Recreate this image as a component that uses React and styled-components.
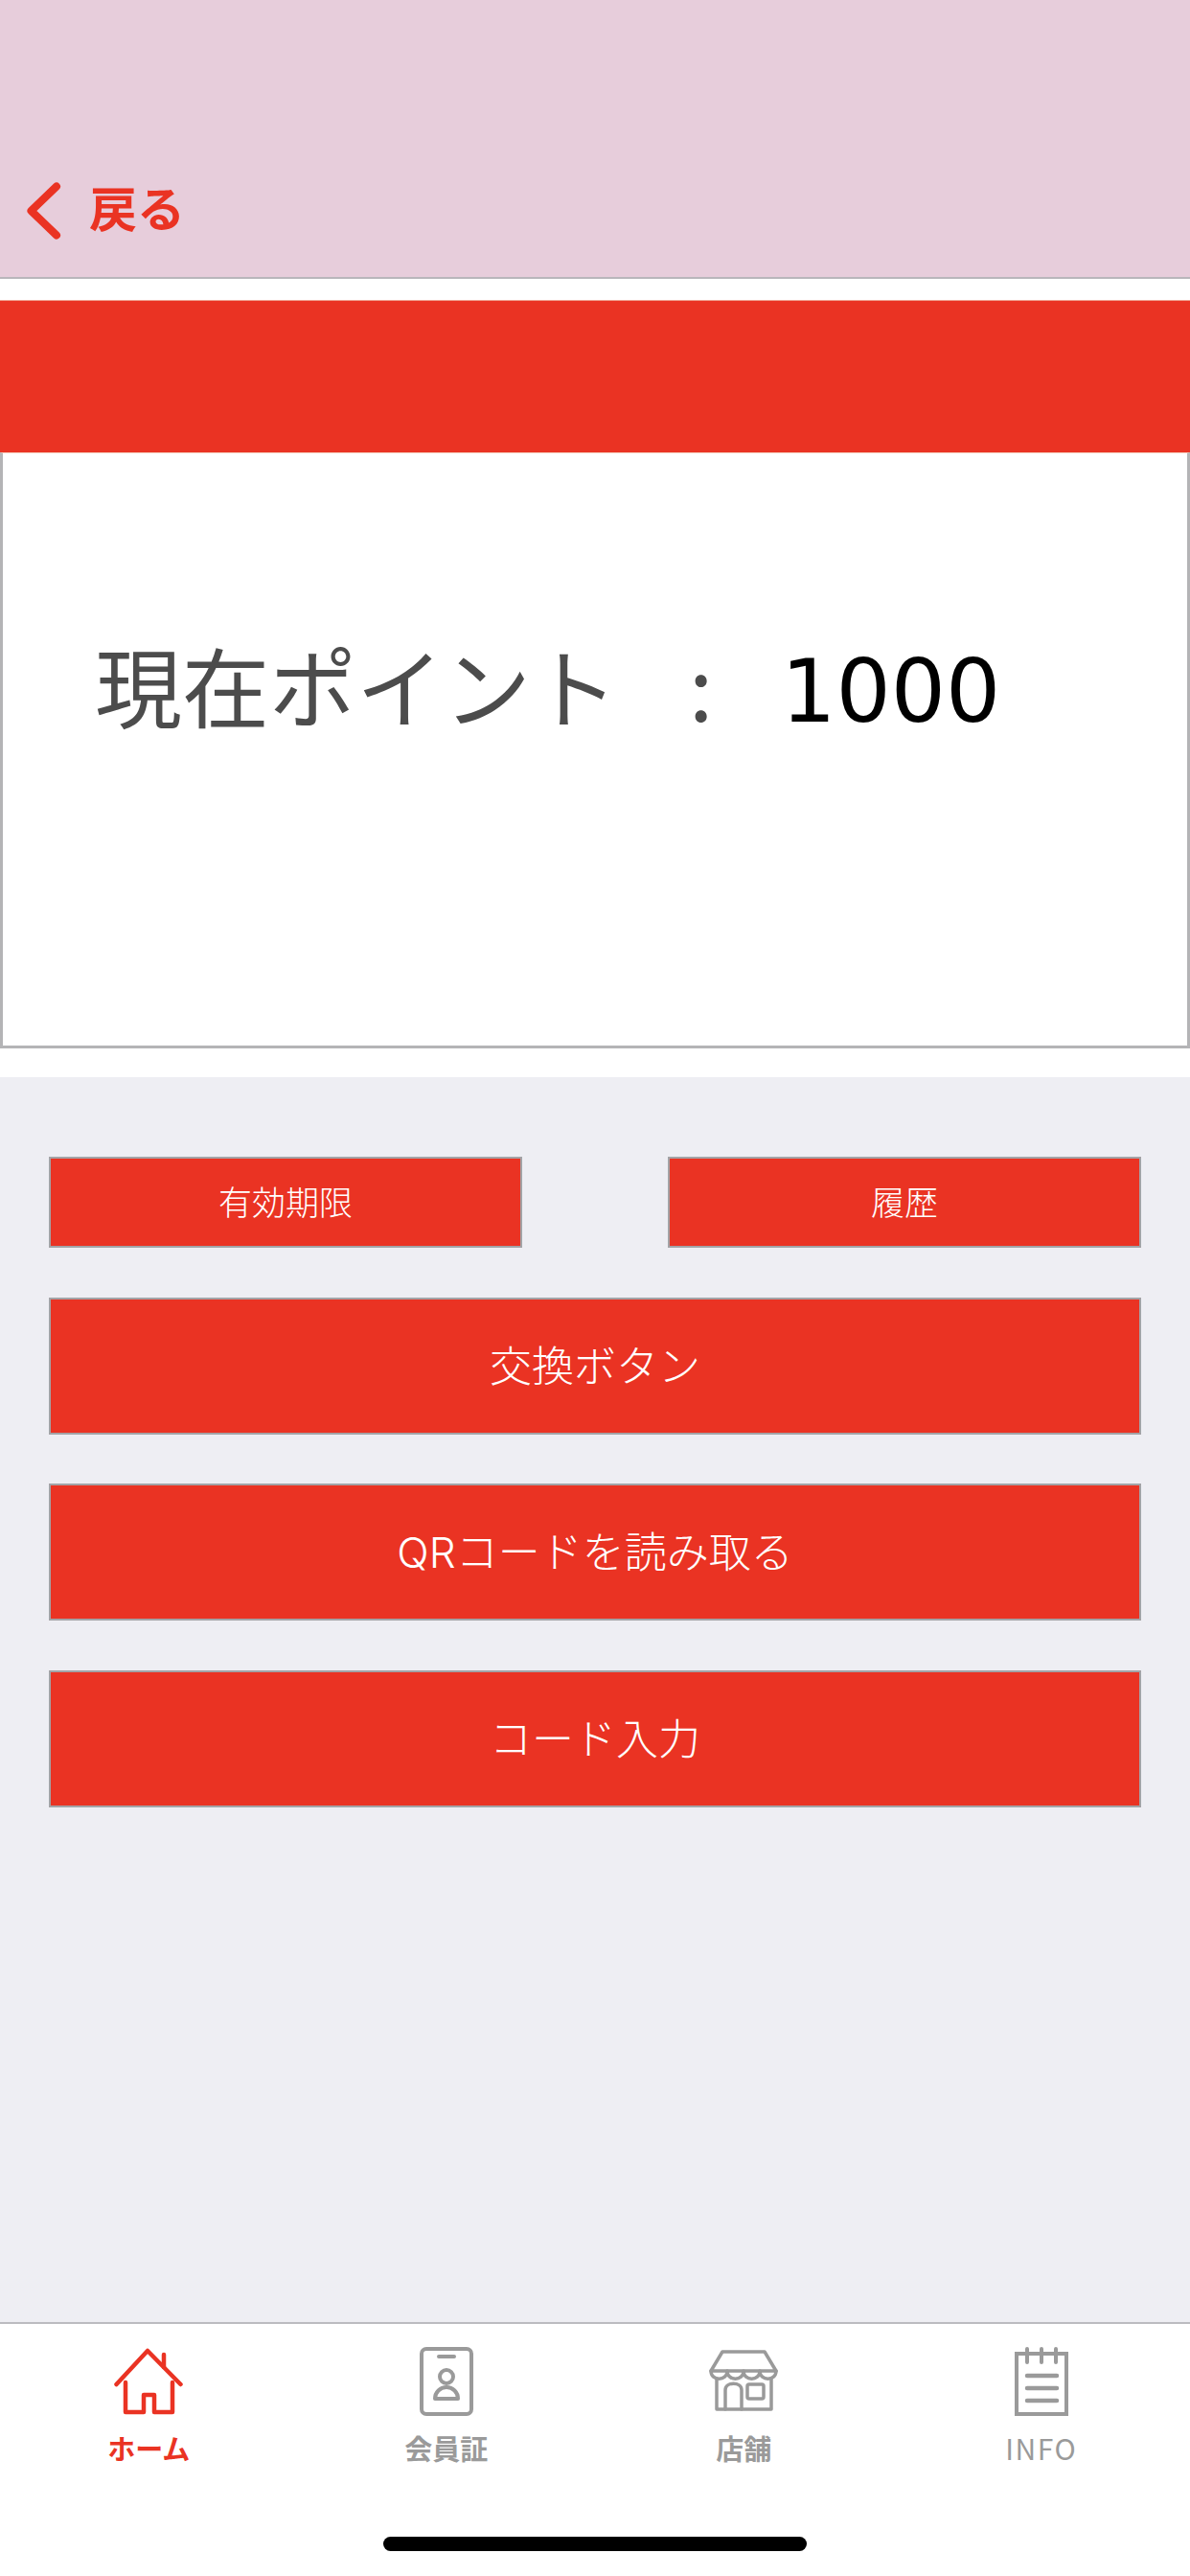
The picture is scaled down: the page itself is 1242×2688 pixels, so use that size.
import React from "react"
import styled, { createGlobalStyle } from "styled-components"

const RED = "#ea3323"
const GREY = "#9a9a9a"

const GlobalStyle = createGlobalStyle`
    html, body {
        margin: 0;
        padding: 0;
        background: #fff;
    }
    body {
        font-family: "Noto Sans CJK JP", "Noto Sans", sans-serif;
    }
`

const HomeIcon = () => (
    <svg width="72" height="70" viewBox="0 0 72 70" fill="none" stroke={RED} strokeWidth="4.5" strokeLinejoin="round" strokeLinecap="round">
        <path d="M2.5 38 L35 3 L69.5 38" />
        <path d="M52 20 L52 7" />
        <path d="M12 36 V67 H31 V49 H42 V67 H61 V36" />
    </svg>
)

const CardIcon = () => (
    <svg width="56" height="72" viewBox="0 0 56 72" fill="none" stroke={GREY} strokeWidth="4" strokeLinejoin="round" strokeLinecap="round">
        <rect x="2" y="2" width="52" height="68" rx="5" />
        <path d="M20 10 H36" />
        <circle cx="28" cy="31" r="7" />
        <path d="M16 54 A12 12 0 0 1 40 54 Z" />
    </svg>
)

const StoreIcon = () => (
    <svg width="72" height="66" viewBox="0 0 72 66" fill="none" stroke={GREY} strokeWidth="3.5" strokeLinejoin="round" strokeLinecap="round">
        <path d="M14 2 H58 L70 22 H2 Z" />
        <path d="M2 22 C2 33 19 33 19 22 C19 33 36 33 36 22 C36 33 53 33 53 22 C53 33 70 33 70 22" />
        <path d="M8 30 V62 H65 V30" />
        <path d="M17 62 V42 C17 33 34 33 34 42 V62" />
        <rect x="40" y="36" width="17" height="15" rx="2" />
    </svg>
)

const InfoIcon = () => (
    <svg width="56" height="72" viewBox="0 0 56 72" fill="none" stroke={GREY} strokeWidth="4" strokeLinejoin="miter" strokeLinecap="round">
        <path d="M2 7 H54 V70 H2 Z" />
        <path d="M13 2 V16 M28 2 V16 M43 2 V16" />
        <path d="M13 30 H44 M13 43 H44 M13 56 H44" strokeWidth="4.5" />
    </svg>
)

const tabs = [
    { label: "ホーム", icon: <HomeIcon />, active: true },
    { label: "会員証", icon: <CardIcon /> },
    { label: "店舗", icon: <StoreIcon /> },
    { label: "INFO", icon: <InfoIcon />, thin: true },
]

function App() {
    return (
        <Page>
            <GlobalStyle />
            <Header>
                <BackLink>
                    <svg width="36" height="60" viewBox="0 0 36 60" fill="none" stroke={RED} strokeWidth="8" strokeLinecap="round" strokeLinejoin="round">
                        <path d="M31 4.5 L4.5 30 L31 55.5" />
                    </svg>
                    <BackText>戻る</BackText>
                </BackLink>
            </Header>
            <RedBand />
            <PointCard>
                <PointLabel>現在ポイント</PointLabel>
                <Colon>:</Colon>
                <PointValue>1000</PointValue>
            </PointCard>
            <Actions>
                <SmallRow>
                    <ActionButton small>有効期限</ActionButton>
                    <ActionButton small>履歴</ActionButton>
                </SmallRow>
                <ActionButton>交換ボタン</ActionButton>
                <ActionButton>QRコードを読み取る</ActionButton>
                <ActionButton>コード入力</ActionButton>
            </Actions>
            <TabBar>
                <Tabs>
                    {tabs.map((t) => (
                        <Tab key={t.label} active={t.active}>
                            <TabIcon>{t.icon}</TabIcon>
                            <TabLabel thin={t.thin}>{t.label}</TabLabel>
                        </Tab>
                    ))}
                </Tabs>
                <HomeIndicator />
            </TabBar>
        </Page>
    )
}

export default App

const Page = styled.div`
    width: 1242px;
    height: 2688px;
    display: flex;
    flex-direction: column;
    overflow: hidden;
    background: #fff;
`

const Header = styled.header`
    box-sizing: border-box;
    height: 291px;
    flex: none;
    background: #e7cddb;
    border-bottom: 2px solid #b9b6bb;
    display: flex;
    align-items: flex-start;
    padding: 185px 0 0 28px;
`

const BackLink = styled.div`
    display: flex;
    align-items: center;
    gap: 29px;
`

const BackText = styled.span`
    color: ${RED};
    font-size: 50px;
    font-weight: 700;
    line-height: 60px;
    margin-bottom: 10px;
`

const RedBand = styled.div`
    box-sizing: border-box;
    height: 159px;
    flex: none;
    margin-top: 22px;
    background: ${RED};
    border-top: 1px solid #f0a08f;
`

const PointCard = styled.section`
    box-sizing: border-box;
    height: 622px;
    flex: none;
    background: #fff;
    border: 3px solid #b4b4b6;
    border-top-color: #f4c9b8;
    border-top-width: 1px;
    display: flex;
    align-items: center;
    padding: 0 0 138px 96px;
`

const PointLabel = styled.span`
    color: #4c4c4c;
    font-size: 91px;
    font-weight: 400;
    line-height: 1;
    white-space: nowrap;
`

const Colon = styled.span`
    color: #4c4c4c;
    font-size: 91px;
    font-weight: 400;
    line-height: 1;
    margin-left: 74px;
`

const PointValue = styled.span`
    color: #000;
    font-family: "DejaVu Sans", sans-serif;
    font-size: 90px;
    line-height: 1;
    margin-left: 71px;
    margin-top: 18px;
`

const Actions = styled.main`
    flex: 1;
    margin-top: 30px;
    background: #eeeef3;
    display: flex;
    flex-direction: column;
    gap: 51.5px;
    padding: 83px 51px 0;
`

const SmallRow = styled.div`
    display: flex;
    justify-content: space-between;
`

const ActionButton = styled.button`
    box-sizing: border-box;
    display: block;
    flex: none;
    width: ${(p) => (p.small ? "494px" : "100%")};
    height: ${(p) => (p.small ? "95px" : "143px")};
    padding: 0 0 5px;
    background: ${RED};
    border: 2px solid #a3a3a6;
    border-radius: 0;
    color: #fff;
    font-family: "Inter", "Noto Sans CJK JP", sans-serif;
    font-size: ${(p) => (p.small ? "35px" : "44px")};
    font-weight: 300;
`

const TabBar = styled.nav`
    box-sizing: border-box;
    height: 265px;
    flex: none;
    background: #fff;
    border-top: 2px solid #bcbcc0;
    display: flex;
    flex-direction: column;
    align-items: center;
`

const Tabs = styled.div`
    width: 100%;
    display: grid;
    grid-template-columns: repeat(4, 1fr);
    padding-top: 24px;
`

const Tab = styled.div`
    display: flex;
    flex-direction: column;
    align-items: center;
    color: ${(p) => (p.active ? RED : GREY)};
`

const TabIcon = styled.div`
    height: 72px;
    display: flex;
    align-items: center;
    justify-content: center;
`

const TabLabel = styled.span`
    margin-top: 15px;
    font-size: ${(p) => (p.thin ? "30px" : "29px")};
    font-weight: ${(p) => (p.thin ? 400 : 700)};
    line-height: 36px;
    letter-spacing: ${(p) => (p.thin ? "1.5px" : "0")};
`

const HomeIndicator = styled.div`
    width: 442px;
    height: 15px;
    margin-top: 75px;
    border-radius: 8px;
    background: #000;
`
